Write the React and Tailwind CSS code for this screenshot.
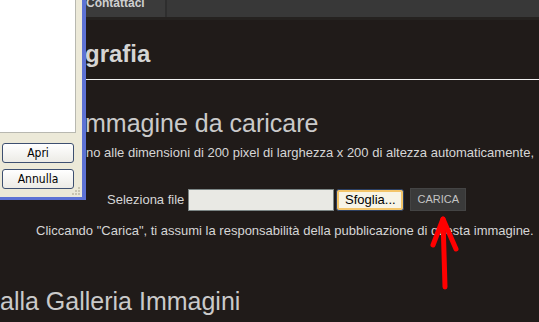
export default function App() {
  const small = { fontFamily: '"Liberation Sans", Arial, sans-serif' };
  return (
    <div className="relative w-[539px] h-[322px] overflow-hidden bg-[#201b19] text-[#d6d6d6]" style={small}>
      {/* top menu bar */}
      <div className="flex h-[20px] bg-[#383838] border-b-[3px] border-[#252220]">
        <div className="w-[85px]" />
        <div className="w-[82px] bg-[#3b3b3b] border-r-2 border-[#2e2e2e] pl-[1px]">
          <div className="-mt-[3px] text-[12px] leading-[12px] font-bold text-[#d0d0d0]">Contattaci</div>
        </div>
      </div>

      <div className="pl-[85px]">
        <h1 className="mt-[22px] text-[24px] leading-[24px] font-bold text-[#d4d4d4]">grafia</h1>
        <div className="mt-[13px] h-[1px] bg-[#f2f2f2]" />
        <h2 className="mt-[31px] text-[25px] leading-[25px] text-[#cacaca]">mmagine da caricare</h2>
        <p className="mt-[9px] text-[13px] leading-[15px] whitespace-nowrap pl-[1px]">
          no alle dimensioni di 200 pixel di larghezza x 200 di altezza automaticamente,
        </p>
      </div>

      <div className="mt-[28px] flex items-center pl-[107px] h-[23px]">
        <span className="text-[13px] leading-[15px] mr-[4px]">Seleziona file</span>
        <div className="w-[146px] h-[22px] bg-[#e9e9e4] border border-[#7b8585]" />
        <button className="ml-[2px] w-[68px] h-[22px] rounded-[3px] border border-[#2b3f63] bg-[#f7f4e6] shadow-[inset_0_0_0_2px_#f3c56a] text-[13px] leading-[15px] text-black">
          Sfoglia...
        </button>
        <button className="ml-[6px] w-[56px] h-[23px] bg-[#3a3a3a] border border-[#444] text-[11px] leading-[13px] text-[#c4c4c4]">
          CARICA
        </button>
      </div>

      <p className="mt-[12px] pl-[36px] text-[13px] leading-[15px] whitespace-nowrap">
        Cliccando "Carica", ti assumi la responsabilità della pubblicazione di questa immagine.
      </p>

      <h2 className="mt-[51px] text-[25px] leading-[25px] text-[#cacaca] whitespace-nowrap">alla Galleria Immagini</h2>

      {/* open-file dialog lying over the page */}
      <div className="absolute left-0 top-0 w-[86px] h-[200px] bg-[#ece9d8] border-r-[4px] border-b-[3px] border-[#5d72d4]">
        <div className="w-[76px] h-[133px] bg-white border-r border-b border-[#b8b8b0]" />
        <div className="mt-[10px] flex flex-col gap-[6px] pl-[2px]">
          <button className="w-[72px] h-[20px] rounded-[3px] border border-[#3d4f70] bg-gradient-to-b from-white to-[#ecebe6] text-[12px] leading-[14px] text-black" style={{ fontFamily: 'Tahoma, "DejaVu Sans Condensed", sans-serif' }}>
            Apri
          </button>
          <button className="w-[72px] h-[20px] rounded-[3px] border border-[#3d4f70] bg-gradient-to-b from-white to-[#ecebe6] text-[12px] leading-[14px] text-black" style={{ fontFamily: 'Tahoma, "DejaVu Sans Condensed", sans-serif' }}>
            Annulla
          </button>
        </div>
        <svg className="absolute right-[1px] bottom-[1px]" width="10" height="10" viewBox="0 0 10 10">
          <g fill="#c9c5b2">
            <rect x="7" y="1" width="2" height="2" />
            <rect x="4" y="4" width="2" height="2" />
            <rect x="7" y="4" width="2" height="2" />
            <rect x="1" y="7" width="2" height="2" />
            <rect x="4" y="7" width="2" height="2" />
            <rect x="7" y="7" width="2" height="2" />
          </g>
        </svg>
      </div>

      {/* red annotation arrow */}
      <svg className="absolute left-0 top-0" width="539" height="322" viewBox="0 0 539 322">
        <g stroke="#ff0000" strokeWidth="5" strokeLinecap="round" fill="none">
          <line x1="445" y1="287" x2="443" y2="219" />
          <polyline points="433,245 443,219 456,249" strokeLinejoin="round" />
        </g>
      </svg>
    </div>
  );
}
